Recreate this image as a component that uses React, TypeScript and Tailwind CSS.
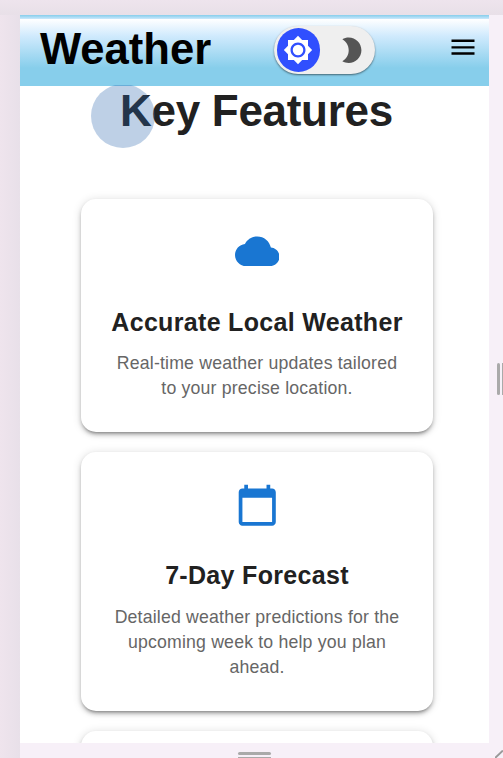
const CLOUD = 'M19.35 10.04C18.67 6.59 15.64 4 12 4 9.11 4 6.6 5.64 5.35 8.04 2.34 8.36 0 10.91 0 14c0 3.31 2.69 6 6 6h13c2.76 0 5-2.24 5-5 0-2.64-2.05-4.78-4.65-4.96z';
const CALENDAR = 'M20 3h-1V1h-2v2H7V1H5v2H4c-1.1 0-2 .9-2 2v16c0 1.1.9 2 2 2h16c1.1 0 2-.9 2-2V5c0-1.1-.9-2-2-2zm0 18H4V8h16v13z';

function FeatureCard({ icon, title, lines }: { icon?: string; title?: string; lines?: string }) {
  return (
    <article className="flex w-[352px] shrink-0 flex-col items-center rounded-[15px] bg-white px-7 pt-[30.5px] pb-[30.5px] text-center shadow-[0_3px_3px_-2px_rgba(0,0,0,0.3),0_3px_4px_rgba(0,0,0,0.2),0_1px_10px_rgba(0,0,0,0.14)]">
      <svg viewBox="0 0 24 24" className="size-[44.5px] shrink-0 fill-[#1976d2]">
        <path d={icon} />
      </svg>
      <h2 className="mt-[28px] text-[25px] leading-10 font-bold tracking-[0.32px] whitespace-nowrap text-[#212121]">{title}</h2>
      <p className="mt-[9.5px] text-[17.7px] leading-[25.3px] tracking-[0.18px] text-[#666]">{lines}</p>
    </article>
  );
}

export default function App() {
  return (
    <div className="relative flex h-[758px] w-[503px] flex-col overflow-hidden bg-[linear-gradient(90deg,#efe4ed_0,#e8e0e9_20px)] font-['Liberation_Sans',Arial,sans-serif]">
      <div className="h-[15px] shrink-0 bg-[linear-gradient(180deg,#eee4ed,#e8e0e8)]" />
      <div className="ml-5 flex h-[728px] shrink-0">
        <div className="relative flex w-[469px] shrink-0 flex-col overflow-hidden bg-white">
          <header className="flex h-[70.5px] shrink-0 items-start bg-[linear-gradient(180deg,#87ceeb_0,#a8dbf4_2px,#cce9fb_4px,#fff_4px,#d0eafd_21px,#87ceeb_53px)] pl-5">
            <h1 className="mt-[9px] w-[234px] text-[43.6px] leading-[50px] font-bold text-black">Weather</h1>
            <div className="mt-[11px] flex h-[48px] w-[101px] items-center rounded-full bg-[#efefef] pl-[2.5px] shadow-[0_1px_2px_rgba(0,0,0,0.5)]">
              <span className="flex size-[43.5px] items-center justify-center rounded-full bg-[#304ffe]">
                <svg viewBox="0 0 24 24" className="size-[30px] fill-white">
                  <path d="M20 15.31L23.31 12 20 8.69V4h-4.69L12 .69 8.69 4H4v4.69L.69 12 4 15.31V20h4.69L12 23.31 15.31 20H20v-4.69zM12 18c-3.31 0-6-2.69-6-6s2.69-6 6-6 6 2.69 6 6-2.69 6-6 6z" />
                  <circle cx="12" cy="12" r="4.2" />
                </svg>
              </span>
              <svg viewBox="0 0 24 24" className="ml-[16px] size-[30.5px] fill-[#555]">
                <path d="M10 2c-1.820 0-3.530.5-5 1.350C7.990 5.080 10 8.300 10 12s-2.010 6.920-5 8.650C6.470 21.500 8.180 22 10 22c5.520 0 10-4.480 10-10S15.520 2 10 2z" />
              </svg>
            </div>
            <svg viewBox="0 0 24 16" className="mt-[24px] ml-[76px] h-[16px] w-[24px]">
              <path d="M.5 1.750h23M.5 8.300h23M.5 14.500h23" className="stroke-black" strokeWidth="2.300" />
            </svg>
          </header>
          <main className="flex flex-col items-center">
            <h1 className="mb-[63px] ml-1 text-[44px] leading-[50px] font-bold tracking-[-0.3px] whitespace-nowrap text-[#212121]">Key Features</h1>
            <div className="ml-[5px] flex flex-col gap-5">
              <FeatureCard icon={CLOUD} title="Accurate Local Weather" lines="Real-time weather updates tailored to your precise location." />
              <FeatureCard icon={CALENDAR} title="7-Day Forecast" lines="Detailed weather predictions for the upcoming week to help you plan ahead." />
              <FeatureCard />
            </div>
          </main>
          <span className="absolute top-[70px] left-[71px] h-[63px] w-[64px] overflow-hidden">
            <span className="absolute -top-px left-0 size-16 rounded-full bg-[#2862ac]/30" />
          </span>
        </div>
        <div className="flex w-[14px] items-center justify-end gap-[2px] overflow-hidden bg-[#f7f0f8]">
          <i className="h-8 w-[3px] shrink-0 rounded-sm bg-[#aaa]" />
          <i className="h-8 w-px shrink-0 bg-[#aaa]" />
        </div>
      </div>
      <div className="ml-5 flex h-[15px] items-start justify-between bg-[#f7f0f8] pt-[9px] pl-[218px]">
        <div className="flex w-[33px] flex-col gap-[2px]">
          <i className="h-[3px] rounded-sm bg-[#aaa]" />
          <i className="h-px bg-[#aaa]" />
        </div>
        <svg viewBox="0 0 8 8" className="-mt-[2px] size-2"><path d="M0 8L8 .5" className="stroke-[#999]" strokeWidth="2" /></svg>
      </div>
    </div>
  );
}
